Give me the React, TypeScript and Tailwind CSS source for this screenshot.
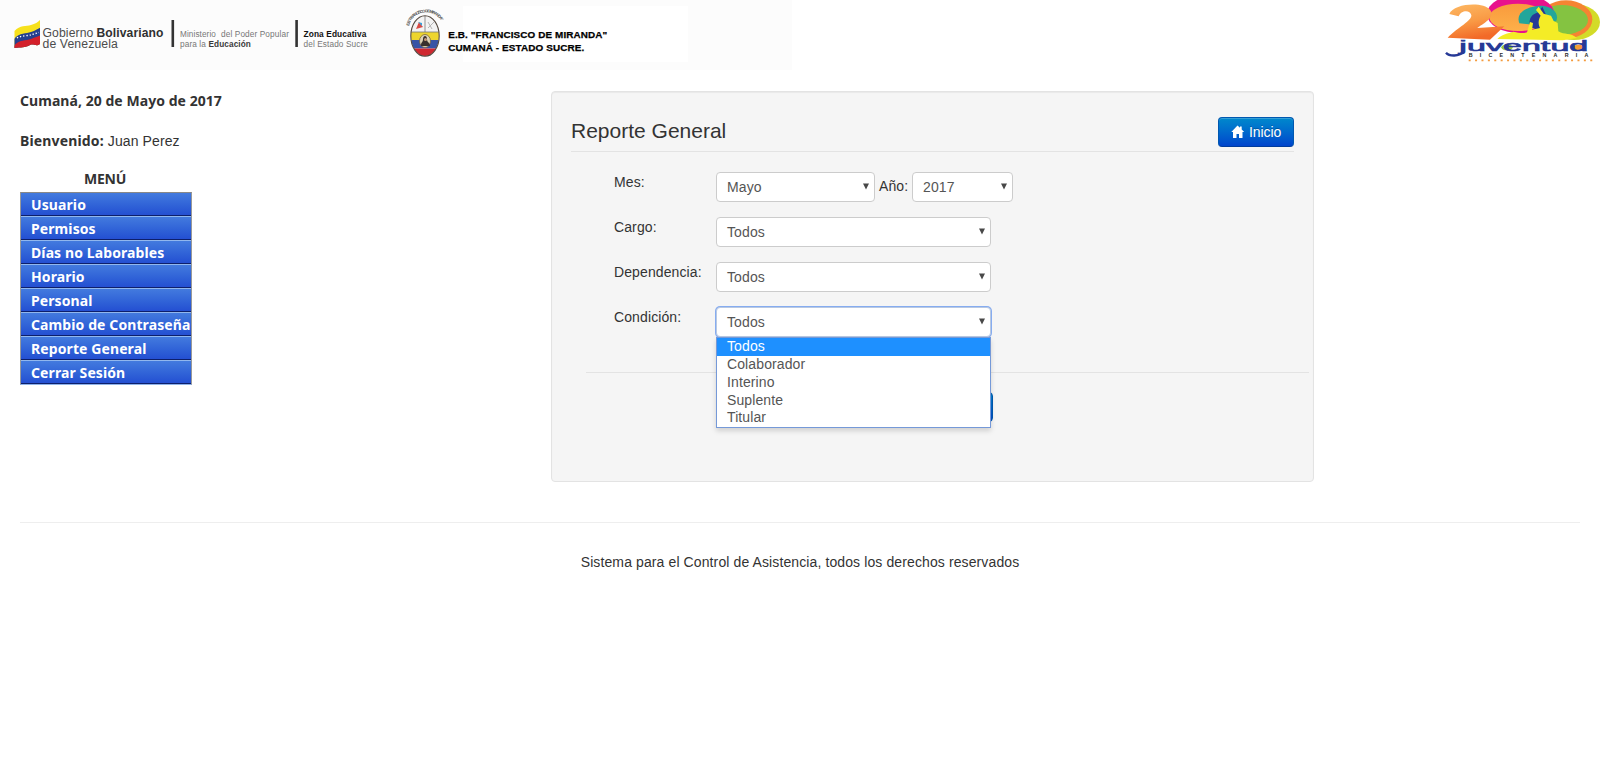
import type { ReactNode } from 'react';

const ARIAL = '"Liberation Sans", Arial, sans-serif';

const MENU = [
  'Usuario',
  'Permisos',
  'Días no Laborables',
  'Horario',
  'Personal',
  'Cambio de Contraseña',
  'Reporte General',
  'Cerrar Sesión',
];

const CONDICIONES = ['Todos', 'Colaborador', 'Interino', 'Suplente', 'Titular'];

function GovernmentBanner() {
  return (
    <svg width="792" height="70" viewBox="0 0 792 70" fontFamily={ARIAL} className="block bg-[#fcfcfc]">
      <rect x="463" y="6" width="225" height="56" fill="#fff" />

      {/* flag */}
      <clipPath id="flag">
        <path d="M14.500 31C20 25 26 26.500 31 25C35 24 38 22 40 20V44C36 47 34 43.500 30 45C25 48 21 47 14.500 48Z" />
      </clipPath>
      <g clipPath="url(#flag)">
        <rect x="14" y="19" width="27" height="30" fill="#f7e11c" />
        <path d="M14 39C20 32 26 34 31 32C36 30 38 29 41 27V50H14Z" fill="#25408f" />
        <path d="M14 46C19 39 26 41 31 39C36 37 38 37 41 35V50H14Z" fill="#d3202a" />
        <path d="M17 38C21 35.500 28 36 32 34.500L39 32.500" fill="none" stroke="#fff" strokeWidth="1.400" strokeDasharray="1.300 1.900" />
      </g>

      <g fill="#4c4c4c" fontSize="12">
        <text x="42.500" y="36.800" textLength="51" lengthAdjust="spacingAndGlyphs">Gobierno</text>
        <text x="96.500" y="36.800" textLength="67" lengthAdjust="spacingAndGlyphs" fontWeight="700" fill="#303030">Bolivariano</text>
        <text x="42.500" y="48.400" textLength="75.500" lengthAdjust="spacingAndGlyphs">de Venezuela</text>
      </g>
      <rect x="171.500" y="20" width="2.600" height="27" fill="#333" />
      <rect x="295.300" y="20" width="2.600" height="27" fill="#333" />
      <g fontSize="8.500" fill="#777">
        <text x="180" y="36.500" textLength="36" lengthAdjust="spacingAndGlyphs">Ministerio</text>
        <text x="221" y="36.500" textLength="68" lengthAdjust="spacingAndGlyphs">del Poder Popular</text>
        <text x="180" y="47" textLength="26" lengthAdjust="spacingAndGlyphs">para la</text>
        <text x="208.500" y="47" textLength="42.500" lengthAdjust="spacingAndGlyphs" fontWeight="700" fill="#3a3a3a">Educación</text>
        <text x="303.500" y="36.500" textLength="63" lengthAdjust="spacingAndGlyphs" fontWeight="700" fill="#111">Zona Educativa</text>
        <text x="303.500" y="47" textLength="64.500" lengthAdjust="spacingAndGlyphs">del Estado Sucre</text>
      </g>

      {/* school crest */}
      <path id="crestArc" d="M409 26C413 8 438 8 443 25" fill="none" />
      <text fontSize="4.200" fontWeight="700" fill="#555">
        <textPath href="#crestArc" textLength="42">E.B. "FRANCISCO DE MIRANDA"</textPath>
      </text>
      <clipPath id="crest">
        <ellipse cx="425" cy="36" rx="14" ry="20" />
      </clipPath>
      <g clipPath="url(#crest)">
        <rect x="410" y="15" width="30" height="18" fill="#f3f3f3" />
        <rect x="410" y="32" width="30" height="8" fill="#edd52e" />
        <rect x="410" y="40" width="30" height="8.500" fill="#3753a5" />
        <rect x="410" y="48.500" width="30" height="9" fill="#cf2830" />
      </g>
      <path d="M425 16V32M411 32H439" stroke="#777" strokeWidth="0.800" />
      <path d="M416 29L419 22L423 27Z" fill="#d84b45" />
      <path d="M418 22L422 23L422 26Z" fill="#3aa0d8" />
      <path d="M428 28L434 22M428 22L432 29" stroke="#b5b5b5" strokeWidth="1" />
      <ellipse cx="425" cy="41" rx="5.500" ry="6.500" fill="#ddd3b8" stroke="#79643c" strokeWidth="0.800" />
      <path d="M421 46C421 41 423 43 423 39C423 35 427 35 427 39C427 43 430 42 430 46Z" fill="#39302c" />
      <circle cx="425.500" cy="39.500" r="1.500" fill="#c49a77" />
      <ellipse cx="425" cy="36" rx="14.200" ry="20.300" fill="none" stroke="#54493f" strokeWidth="1.100" />

      <g fontSize="9.800" fontWeight="700" fill="#000" stroke="#000" strokeWidth="0.250">
        <text x="448.300" y="38" textLength="159" lengthAdjust="spacingAndGlyphs">E.B. "FRANCISCO DE MIRANDA"</text>
        <text x="448.300" y="51" textLength="136" lengthAdjust="spacingAndGlyphs">CUMANÁ - ESTADO SUCRE.</text>
      </g>
    </svg>
  );
}

function BicentennialLogo() {
  return (
    <svg width="170" height="75" viewBox="0 0 510 225" fontFamily={ARIAL} className="block">
      <defs>
        <linearGradient id="two" x1="0" y1="0" x2="0.300" y2="1">
          <stop offset="0" stopColor="#fdb863" />
          <stop offset="0.550" stopColor="#f99a45" />
          <stop offset="1" stopColor="#f26a28" />
        </linearGradient>
        <linearGradient id="zero" x1="0" y1="0" x2="0" y2="1">
          <stop offset="0" stopColor="#f99a3c" />
          <stop offset="1" stopColor="#fdb04a" />
        </linearGradient>
      </defs>
      <ellipse cx="432" cy="66" rx="78" ry="54" fill="#d3db28" />
      <ellipse cx="408" cy="58" rx="79" ry="57" fill="#f58432" />
      <ellipse cx="396" cy="60" rx="78" ry="45" fill="#84c341" />
      <ellipse cx="272" cy="42" rx="101" ry="58" fill="#e8128c" />
      <ellipse cx="264" cy="52" rx="86" ry="41" fill="url(#zero)" />
      <path d="M268 70C256 38 292 17 337 17C370 20 387 42 379 62L345 78Z" fill="#22a69b" />
      <path d="M300 82C294 52 308 42 325 37L337 20L347 42C359 60 368 63 365 78L330 91Z" fill="#263996" />
      <path d="M58 42C70 10 160 4 180 29C198 53 156 72 142 84L223 79L180 119L53 113C83 83 126 62 124 46C120 27 92 31 86 49Z" fill="url(#two)" />
      <path d="M202 117C218 101 232 101 250 95C266 98 277 102 291 97L300 66L309 69L306 89L330 84C323 70 326 57 332 47L318 30L326 20L341 41L363 47L371 63L383 69L385 94C404 106 421 97 441 114L398 121Z" fill="#f4ec26" />

      <ellipse cx="231" cy="142" rx="17" ry="9" fill="#9acb3b" />
      <ellipse cx="446" cy="143" rx="18" ry="9" fill="#f79b35" />
      <text x="88" y="152" fontSize="42" fill="#263996" stroke="#263996" strokeWidth="1.800" textLength="387" lengthAdjust="spacingAndGlyphs">juventud</text>
      <path d="M48 158C58 170 88 169 99 157V151" fill="none" stroke="#263996" strokeWidth="7" />
      <text x="116" y="171" fontSize="16" fontWeight="700" fill="#292929" textLength="359">BICENTENARIA</text>
      <path d="M116 181H490" stroke="#f49b3e" strokeWidth="5" strokeDasharray="6 13.200" />
    </svg>
  );
}

function Select({ value, className }: { value: string; className: string }) {
  return (
    <div className={`flex h-[30px] items-center justify-between rounded border bg-white pr-[5px] pl-[10px] text-[#555] ${className}`}>
      <span>{value}</span>
      <svg width="6" height="7" viewBox="0 0 6 7" className="mt-[-1px]">
        <path d="M0 0.500H6L3 6.500Z" fill="#484848" />
      </svg>
    </div>
  );
}

function Field({ label, children }: { label: string; children: ReactNode }) {
  return (
    <div className="flex h-[30px]">
      <label className="w-[102px] shrink-0 whitespace-nowrap">{label}</label>
      {children}
    </div>
  );
}

export default function App() {
  return (
    <div className="min-h-[778px] bg-white font-['Liberation_Sans',Arial,sans-serif] text-sm leading-5 tracking-[0.11px] text-[#333]">
      <header className="flex h-[91px] items-start justify-between">
        <GovernmentBanner />
        <BicentennialLogo />
      </header>

      <main className="flex h-[391px] px-5">
        <aside className="w-[531px]">
          <p className="font-['Noto_Sans',sans-serif] font-bold tracking-[0.05px]">Cumaná, 20 de Mayo de 2017</p>
          <p className="mt-5">
            <b className="font-['Noto_Sans',sans-serif] tracking-[0.15px]">Bienvenido:</b> Juan Perez
          </p>
          <div className="mt-[18px] w-[172px] font-['Noto_Sans',sans-serif] font-bold">
            <h2 className="pr-[2px] text-center tracking-[-0.2px]">MENÚ</h2>
            <ul className="mt-[3px] border border-t-[#888] border-r-[#999] border-b-[#8fb2e8] border-l-[#999] tracking-[0.1px] text-white">
              {MENU.map((item, i) => (
                <li
                  key={item}
                  className={`border-b border-b-[#0d1f6b] bg-linear-to-b from-[#437ade] to-[#244fd2] pt-[2px] pl-[10px] whitespace-nowrap ${
                    i === 0 ? 'h-[23px]' : 'h-6 border-t border-t-[#91b7ee]'
                  }`}
                >
                  {item}
                </li>
              ))}
            </ul>
          </div>
        </aside>

        <section className="w-[763px] rounded border border-[#e3e3e3] bg-[#f5f5f5] px-[19px] pt-[25px] shadow-[inset_0_1px_1px_rgba(0,0,0,0.05)]">
          <div className="flex h-[35px] w-[723px] justify-between border-b border-[#e3e3e3]">
            <h1 className="font-['Liberation_Sans',Arial,sans-serif] text-[21px] leading-[28px] tracking-normal">Reporte General</h1>
            <button className="flex h-[30px] w-[76px] items-center rounded border border-[#0058b0] border-b-[#003c9c] bg-linear-to-b from-[#0088cc] to-[#0044cc] pl-3 text-white shadow-[inset_0_1px_0_rgba(255,255,255,0.2)] [text-shadow:0_-1px_0_rgba(0,0,0,0.25)]">
              <svg width="14" height="14" viewBox="0 0 14 14" className="mr-1 block">
                <path d="M6.500 0.500L0.300 7H2V13H5.500V9H8V13H11.500V7H13.200L10.700 4.400V1.500H9V2.800Z" fill="#fff" />
              </svg>
              <span className="tracking-[-0.1px]">Inicio</span>
            </button>
          </div>

          <form className="mt-5 flex flex-col gap-[15px] pl-[43px]">
            <Field label="Mes:">
              <Select value="Mayo" className="w-[159px] border-[#ccc]" />
              <label className="mt-1 ml-1 w-[33px]">Año:</label>
              <Select value="2017" className="w-[101px] border-[#ccc]" />
            </Field>
            <Field label="Cargo:">
              <Select value="Todos" className="w-[275px] border-[#ccc]" />
            </Field>
            <Field label="Dependencia:">
              <Select value="Todos" className="w-[275px] border-[#ccc]" />
            </Field>
            <Field label="Condición:">
              <div className="relative w-[275px]">
                <Select value="Todos" className="border-[#b9c9e2] shadow-[0_0_0_1px_#86acf0]" />
                <ul className="absolute top-[30px] left-0 z-10 h-[91px] w-[275px] border border-[#7599d8] bg-white text-[#555] shadow-[0_3px_5px_rgba(0,0,0,0.15)]">
                  {CONDICIONES.map((c, i) => (
                    <li
                      key={c}
                      className={
                        i === 0
                          ? 'h-[18px] bg-[#1e90ff] pl-[10px] leading-[17px] text-white'
                          : 'h-[17.75px] pl-[10px] leading-[17.75px]'
                      }
                    >
                      {c}
                    </li>
                  ))}
                </ul>
              </div>
            </Field>
          </form>
          <div className="mt-[35px] ml-[15px] w-[723px] border-t border-[#e3e3e3] pt-[19px]">
            <div className="ml-[200px] h-[30px] w-[207px] rounded border border-[#0058b0] bg-linear-to-b from-[#0088cc] to-[#0044cc]" />
          </div>
        </section>
      </main>

      <footer className="mx-5 mt-10 border-t border-[#eee] pt-[29px] text-center">
        Sistema para el Control de Asistencia, todos los derechos reservados
      </footer>
    </div>
  );
}
